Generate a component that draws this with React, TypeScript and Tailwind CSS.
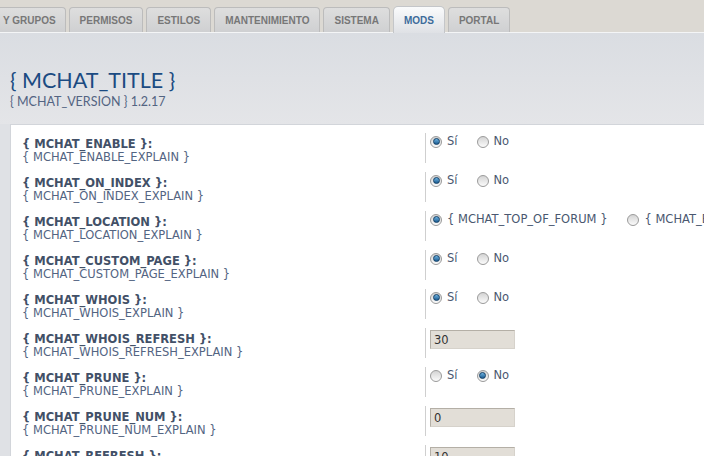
import React from 'react';

type Row = {
  name: string;
  kind: 'yesno' | 'text' | 'location';
  value?: string;
  yes?: boolean;
};

const tabs = ['PERMISOS', 'ESTILOS', 'MANTENIMIENTO', 'SISTEMA', 'MODS', 'PORTAL'];

const rows: Row[] = [
  { name: 'MCHAT_ENABLE', kind: 'yesno', yes: true },
  { name: 'MCHAT_ON_INDEX', kind: 'yesno', yes: true },
  { name: 'MCHAT_LOCATION', kind: 'location' },
  { name: 'MCHAT_CUSTOM_PAGE', kind: 'yesno', yes: true },
  { name: 'MCHAT_WHOIS', kind: 'yesno', yes: true },
  { name: 'MCHAT_WHOIS_REFRESH', kind: 'text', value: '30' },
  { name: 'MCHAT_PRUNE', kind: 'yesno', yes: false },
  { name: 'MCHAT_PRUNE_NUM', kind: 'text', value: '0' },
  { name: 'MCHAT_REFRESH', kind: 'text', value: '10' },
];

const Radio: React.FC<{ checked?: boolean }> = ({ checked }) => (
  <span className="relative inline-flex h-[12px] w-[12px] shrink-0 items-center justify-center rounded-full border border-[#9a9a9a] bg-gradient-to-b from-[#d4d4d4] to-[#fbfbfb]">
    {checked && (
      <span className="h-[7px] w-[7px] rounded-full border border-[#123f66] bg-gradient-to-b from-[#6cb2e0] to-[#1b5d92]" />
    )}
  </span>
);

const Option: React.FC<{ checked?: boolean; label: string }> = ({ checked, label }) => (
  <label className="flex items-center gap-[5px] text-[11.5px] text-[#4a5870]">
    <Radio checked={checked} />
    <span>{label}</span>
  </label>
);

const SettingRow: React.FC<{ row: Row }> = ({ row }) => (
  <div className="mb-[9px] flex h-[30px]">
    <div className="w-[403px] shrink-0 pt-[5px] leading-[13px]">
      <div className="text-[11.5px] font-bold text-[#425067]">{`{ ${row.name} }:`}</div>
      <div className="text-[11.5px] text-[#536482]">{`{ ${row.name}_EXPLAIN }`}</div>
    </div>
    <div className="flex items-start border-l border-[#cfcfcf] pl-[4px] whitespace-nowrap">
      {row.kind === 'yesno' && (
        <div className="flex gap-[19px]">
          <Option checked={row.yes} label="Sí" />
          <Option checked={!row.yes} label="No" />
        </div>
      )}
      {row.kind === 'location' && (
        <div className="flex gap-[20px]">
          <Option checked label="{ MCHAT_TOP_OF_FORUM }" />
          <Option label="{ MCHAT_BOTTOM_OF_FORUM }" />
        </div>
      )}
      {row.kind === 'text' && (
        <input
          readOnly
          value={row.value}
          className="mt-[2px] h-[19px] w-[85px] border border-[#b4afa6] border-b-[#d6d2cb] border-r-[#d6d2cb] bg-[#e2ded7] px-[3px] text-[11.5px] text-[#333] outline-none font-['DejaVu_Sans']"
        />
      )}
    </div>
  </div>
);

export default function App() {
  return (
    <div className="h-[456px] w-[704px] overflow-hidden bg-[#dfe1e5] font-['DejaVu_Sans',sans-serif]">
      <div className="flex h-[33px] items-end gap-[3px] border-b border-[#f4f5f6] bg-[#dcd9d3]">
        <div className="flex h-[25px] items-center rounded-tr-[4px] border border-l-0 border-b-0 border-[#bcbcbc] bg-gradient-to-b from-[#dedede] to-[#cfd0d2] pl-[3px] pr-[9px] font-['Liberation_Sans',sans-serif] text-[10px] font-bold text-[#777]">
          Y GRUPOS
        </div>
        {tabs.map((t) =>
          t === 'MODS' ? (
            <div
              key={t}
              className="-mb-px flex h-[27px] items-center rounded-t-[5px] border border-b-0 border-[#c4c6c9] bg-gradient-to-b from-[#fafbfc] to-[#dfe1e5] px-[10px] font-['Liberation_Sans',sans-serif] text-[10px] font-bold text-[#3d6c9b]"
            >
              {t}
            </div>
          ) : (
            <div
              key={t}
              className="flex h-[25px] items-center rounded-t-[4px] border border-b-0 border-[#bcbcbc] bg-gradient-to-b from-[#dedede] to-[#cfd0d2] px-[10px] font-['Liberation_Sans',sans-serif] text-[10px] font-bold text-[#777]"
            >
              {t}
            </div>
          )
        )}
      </div>

      <div className="bg-gradient-to-b from-[#dadde2] to-[#e4e5e8] pl-[10px] pt-[32px] pb-[15px]">
        <h1 className="font-['Lato',sans-serif] text-[21.5px] leading-[30px] text-[#1b4b82]">
          {'{ MCHAT_TITLE }'}
        </h1>
        <p className="font-['Lato',sans-serif] text-[12.5px] leading-[14px] text-[#536482]">
          {'{ MCHAT_VERSION } 1.2.17'}
        </p>
      </div>

      <div className="ml-[10px] w-[1000px] border border-[#d2d5da] bg-white pl-[11px] pt-[8px]">
        {rows.map((r) => (
          <SettingRow key={r.name} row={r} />
        ))}
      </div>
    </div>
  );
}
